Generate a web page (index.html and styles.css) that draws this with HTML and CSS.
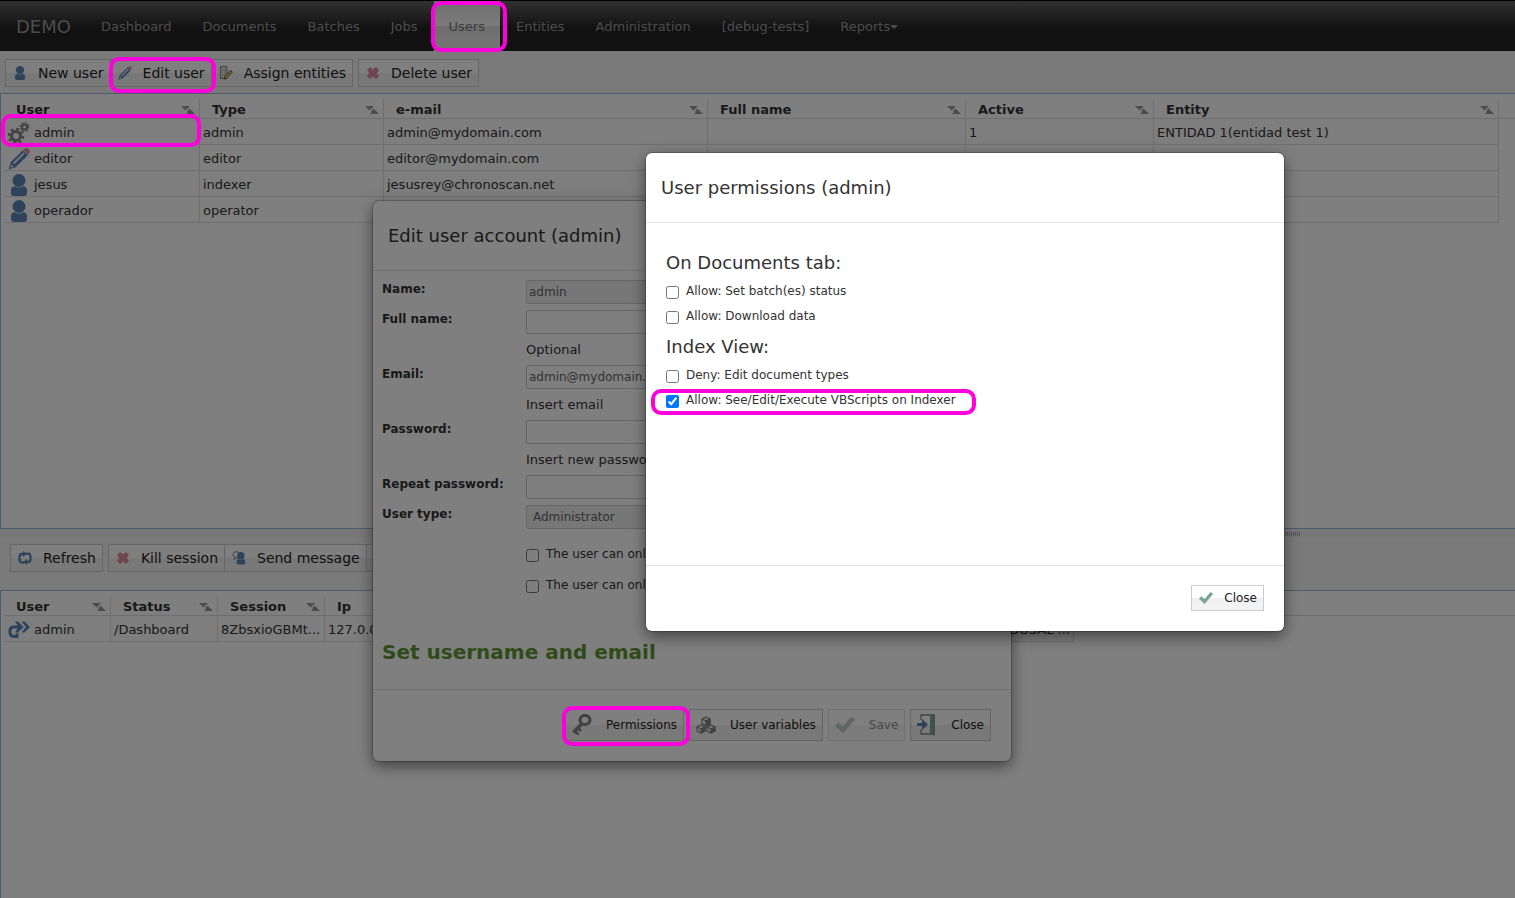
FILE: index.html
```html
<!DOCTYPE html>
<html lang="en">
<head>
<meta charset="utf-8">
<title>Users</title>
<link rel="stylesheet" href="styles.css">
</head>
<body>
<svg class="defs" aria-hidden="true">
  <symbol id="i-user" viewBox="0 0 16 22"><ellipse cx="8" cy="6.500" rx="6.500" ry="6.500"/><path d="M0 19v-3q0-3 3.500-4q4.500 3 9 0q3.500 1 3.500 4v3q0 3-3 3H3q-3 0-3-3z"/></symbol>
  <symbol id="i-pencil" viewBox="0 0 20 20"><path fill="#5b86b8" d="M0.500 19.500l2-6.500L13.500 2l4.500 4.500L7 17.500z"/><path fill="#eef3f9" d="M4.500 13.500L14 4l1.200 1.200L5.700 14.700zM3 15l2 2-2.500 1z"/><path fill="#e08a9c" d="M13.800 1.800Q16.500-.8 18.800 1.200Q21 3.500 18.200 6.200z"/></symbol>
  <symbol id="i-cross" viewBox="0 0 14 14"><path d="M1 4L4 1 7 3.500 10 1 13 4 10.700 7 13 10 10 13 7 10.500 4 13 1 10 3.300 7z"/></symbol>
  <symbol id="i-check" viewBox="0 0 20 17"><path d="M0 9.500L3.500 6 8 10 16.500 0 20 3 8 17z"/></symbol>
  <symbol id="i-sort" viewBox="0 0 14 8"><path d="M0 0h9L4.500 4.500zM5 8h9L9.500 3.500zM6.500 4.500L8.500 2.500 9.500 3.500 6.500 6.500z"/></symbol>
  <symbol id="i-refresh" viewBox="0 0 14 14"><path fill="none" stroke="#5b86b8" stroke-width="2.300" d="M6 11.500H4Q1.500 11.500 1.500 8.500V6Q1.500 3 4 3H7M8 2.700h2q2.500 0 2.500 3V8q0 3-2.500 3H7"/><path d="M5 0l4 3-4 3zM9 8l-4 3 4 3z"/></symbol>
  <symbol id="i-gears" viewBox="0 0 22 22"><g fill="none" stroke="#848484"><circle cx="8" cy="14" r="4.500" stroke-width="3"/><circle cx="8" cy="14" r="7" stroke-width="2.500" stroke-dasharray="2.700 2.800"/><circle cx="16.500" cy="5" r="2.600" stroke-width="2"/><circle cx="16.500" cy="5" r="4.200" stroke-width="1.700" stroke-dasharray="1.600 1.700"/></g></symbol>
  <symbol id="i-login" viewBox="0 0 22 17"><path fill="none" stroke="#5b86b8" stroke-width="3" d="M11 5.500H6Q2 5.500 2 9v2q0 4 5 4h2v-3"/><path d="M7 0h3l5.500 5.500L10 11H7l3.500-5.500zM13.500 0h3L22 5.500 16.500 11h-3L18 5.500z"/></symbol>
  <symbol id="i-entities" viewBox="0 0 14 15"><path fill="#fff" stroke="#777" d="M1 .500h7v13H1z"/><path stroke="#777" stroke-dasharray="1 1" d="M3 2v11M5 2v11M7 2v8" stroke-width="1.300"/><path fill="#e1c14f" stroke="#4d4630" stroke-width=".800" d="M5 14l1-3.500L11.500 5l2 2L8 12.800z"/><path fill="#c45050" d="M11.500 5l1-.800 1.500 1.600-.700 1z"/></symbol>
  <symbol id="i-message" viewBox="0 0 15 15"><circle cx="4.500" cy="4" r="3.300" fill="none" stroke="#999" stroke-width="1.200"/><path fill="#999" d="M2 7v3l3-2z"/><circle cx="9.500" cy="5" r="4"/><path d="M5 13v-2q0-2 2-2.500 2.500 1.500 5 0 2 .500 2 2.500v2q0 1.500-1.500 1.500h-6Q5 14.500 5 13z"/></symbol>
  <symbol id="i-key" viewBox="0 0 20 22"><path fill="none" stroke="#858585" stroke-width="3.500" d="M10 9.500L1.500 18.500"/><path fill="none" stroke="#858585" stroke-width="2.500" d="M3 17l3.500 3.500M6 14l3 3"/><ellipse cx="13" cy="6" rx="5" ry="4.500" fill="none" stroke="#858585" stroke-width="3.200"/></symbol>
  <symbol id="i-cubes" viewBox="0 0 20 18"><g stroke="#858585" stroke-width="1.200"><path fill="#eee" d="M10 1l4 2v5l-4 2-4-2V3zM5 9l4 2v4l-4 2-4-2v-4zM15 9l4 2v4l-4 2-4-2v-4z"/><path fill="#858585" d="M10 5l4-2v5l-4 2zM5 13l4-2v4l-4 2zM15 13l4-2v4l-4 2z"/><path fill="none" d="M6 3l4 2M1 11l4 2M11 11l4 2"/></g></symbol>
  <symbol id="i-door" viewBox="0 0 20 22"><path fill="none" stroke="#888" stroke-width="1.300" d="M4 6V1h13v19H4v-5"/><path fill="#79a594" d="M13 2l5-2v22l-5-2z"/><path fill="#5b86b8" d="M0 9h5V5l6 5.500L5 16v-4H0z"/></symbol>
</svg>

<nav class="navbar">
  <a class="brand" href="#">DEMO</a>
  <a href="#">Dashboard</a>
  <a href="#">Documents</a>
  <a href="#">Batches</a>
  <a href="#">Jobs</a>
  <a class="active" href="#">Users</a>
  <a href="#">Entities</a>
  <a href="#">Administration</a>
  <a href="#">[debug-tests]</a>
  <a href="#">Reports<span class="caret"></span></a>
</nav>

<div class="toolbar">
  <div class="group">
    <button class="btn"><svg class="ic-s blue"><use href="#i-user"/></svg>New user</button>
    <button class="btn"><svg class="ic-s"><use href="#i-pencil"/></svg>Edit user</button>
    <button class="btn"><svg class="ic-s"><use href="#i-entities"/></svg>Assign entities</button>
  </div>
  <button class="btn"><svg class="ic-s red"><use href="#i-cross"/></svg>Delete user</button>
</div>

<section class="panel users">
  <table>
    <colgroup><col class="c-user"><col class="c-type"><col class="c-mail"><col class="c-full"><col class="c-active"><col class="c-entity"><col></colgroup>
    <thead><tr>
      <th>User<svg class="sort"><use href="#i-sort"/></svg></th>
      <th>Type<svg class="sort"><use href="#i-sort"/></svg></th>
      <th>e-mail<svg class="sort"><use href="#i-sort"/></svg></th>
      <th>Full name<svg class="sort"><use href="#i-sort"/></svg></th>
      <th>Active<svg class="sort"><use href="#i-sort"/></svg></th>
      <th>Entity<svg class="sort"><use href="#i-sort"/></svg></th>
      <td class="rest"></td>
    </tr></thead>
    <tbody>
      <tr><td><svg class="ic-r"><use href="#i-gears"/></svg>admin</td><td>admin</td><td>admin@mydomain.com</td><td></td><td>1</td><td>ENTIDAD 1(entidad test 1)</td></tr>
      <tr><td><svg class="ic-r"><use href="#i-pencil"/></svg>editor</td><td>editor</td><td>editor@mydomain.com</td><td></td><td></td><td></td></tr>
      <tr><td><svg class="ic-r blue"><use href="#i-user"/></svg>jesus</td><td>indexer</td><td>jesusrey@chronoscan.net</td><td></td><td></td><td></td></tr>
      <tr><td><svg class="ic-r blue"><use href="#i-user"/></svg>operador</td><td>operator</td><td></td><td></td><td></td><td></td></tr>
    </tbody>
  </table>
</section>

<div class="splitter"><span class="grip"></span></div>

<div class="toolbar lower">
  <button class="btn"><svg class="ic-s blue"><use href="#i-refresh"/></svg>Refresh</button>
  <div class="group">
    <button class="btn"><svg class="ic-s red"><use href="#i-cross"/></svg>Kill session</button>
    <button class="btn"><svg class="ic-s blue"><use href="#i-message"/></svg>Send message</button>
    <button class="btn" aria-label="More"></button>
  </div>
</div>

<section class="panel sessions">
  <table>
    <colgroup><col class="c-ses"><col class="c-s"><col class="c-s"><col class="c-s"><col class="c-s"><col class="c-s"><col class="c-s"><col class="c-s"><col class="c-s"><col class="c-s"><col></colgroup>
    <thead><tr>
      <th>User<svg class="sort"><use href="#i-sort"/></svg></th>
      <th>Status<svg class="sort"><use href="#i-sort"/></svg></th>
      <th>Session<svg class="sort"><use href="#i-sort"/></svg></th>
      <th>Ip</th><th></th><th></th><th></th><th></th><th></th><th></th>
      <td class="rest"></td>
    </tr></thead>
    <tbody>
      <tr><td><svg class="ic-r blue"><use href="#i-login"/></svg>admin</td><td>/Dashboard</td><td>8ZbsxioGBMt...</td><td>127.0.0.1</td><td></td><td></td><td></td><td></td><td></td><td class="end">DUSAL ...</td></tr>
    </tbody>
  </table>
</section>

<form class="dialog edit">
  <h2>Edit user account (admin)</h2>
  <div class="fields">
    <label class="name" for="f-name">Name:</label>
    <div class="value"><input id="f-name" type="text" value="admin" disabled></div>
    <label class="name" for="f-full">Full name:</label>
    <div class="value"><input id="f-full" type="text"><p>Optional</p></div>
    <label class="name" for="f-mail">Email:</label>
    <div class="value"><input id="f-mail" type="text" value="admin@mydomain.com"><p>Insert email</p></div>
    <label class="name" for="f-pass">Password:</label>
    <div class="value"><input id="f-pass" type="password"><p>Insert new password</p></div>
    <label class="name" for="f-rep">Repeat password:</label>
    <div class="value"><input id="f-rep" type="password"></div>
    <label class="name" for="f-kind">User type:</label>
    <div class="value"><select id="f-kind" disabled><option>Administrator</option></select></div>
  </div>
  <div class="limits">
    <label class="tick"><input type="checkbox">The user can only</label>
    <label class="tick"><input type="checkbox">The user can only</label>
  </div>
  <h3>Set username and email</h3>
  <footer>
    <button type="button" class="btn"><svg class="ic-l"><use href="#i-key"/></svg>Permissions</button>
    <button type="button" class="btn"><svg class="ic-l"><use href="#i-cubes"/></svg>User variables</button>
    <button type="button" class="btn" disabled><svg class="ic-l green"><use href="#i-check"/></svg>Save</button>
    <button type="button" class="btn"><svg class="ic-l"><use href="#i-door"/></svg>Close</button>
  </footer>
</form>

<div class="overlay"></div>

<form class="dialog permissions">
  <h2>User permissions (admin)</h2>
  <div class="content">
    <h4>On Documents tab:</h4>
    <label class="tick"><input type="checkbox">Allow: Set batch(es) status</label>
    <label class="tick"><input type="checkbox">Allow: Download data</label>
    <h4>Index View:</h4>
    <label class="tick"><input type="checkbox">Deny: Edit document types</label>
    <label class="tick"><input type="checkbox" checked>Allow: See/Edit/Execute VBScripts on Indexer</label>
  </div>
  <footer>
    <button type="button" class="btn"><svg class="ic-s green"><use href="#i-check"/></svg>Close</button>
  </footer>
</form>

<div class="mark m-users"></div>
<div class="mark m-edit"></div>
<div class="mark m-admin"></div>
<div class="mark m-perm"></div>
<div class="mark m-script"></div>
</body>
</html>
```
FILE: styles.css
```css
* { box-sizing: border-box; }
body {
  margin: 0;
  height: 100vh;
  display: flex;
  flex-direction: column;
  overflow: hidden;
  position: relative;
  background: #f4f4f4;
  color: #333;
  font: 13px/20px Verdana, "DejaVu Sans", sans-serif;
}
.defs { position: absolute; width: 0; height: 0; }
svg { flex: none; }
.blue { fill: #5b86b8; }
.red { fill: #e08a9c; }
.green { fill: #79a594; }

.navbar {
  display: flex;
  flex: none;
  gap: 1px;
  height: 51px;
  padding-left: 1px;
  border-top: 1px solid #000;
  background: linear-gradient(#626262, #222 55%);
}
.navbar a {
  display: flex;
  align-items: center;
  padding: 2px 15px 0;
  color: #999;
  text-decoration: none;
}
.navbar .brand { font-size: 18px; padding-right: 14px; }
.navbar .active { color: #777; background: linear-gradient(#dcdcdc, #f8f8f8 50%, #dcdcdc 50%, #ececec); }
.caret { border: 4px solid transparent; border-top-color: #999; border-bottom: 0; }

.toolbar { display: flex; flex: none; gap: 5px; height: 42px; padding: 8px 5px 6px; }
.toolbar.lower { height: 53px; padding: 7px 10px 18px; }
.group { display: flex; }
.group .btn + .btn { border-left: 0; }
.btn {
  display: flex;
  align-items: center;
  margin: 0;
  padding: 0 6px;
  gap: 10px;
  border: 1px solid #ccc;
  background: linear-gradient(#fff 50%, #f0f0f0 50%, #f4f4f4);
  color: #222;
  font: 14px/20px Verdana, "DejaVu Sans", sans-serif;
  white-space: nowrap;
}
.ic-s { width: 16px; height: 14px; }
.ic-r { width: 22px; height: 22px; }
.ic-l { width: 20px; height: 22px; }

.panel {
  flex: 437 1 0;
  min-height: 0;
  overflow: hidden;
  padding: 5px 0 0 3px;
  border: 1px solid #9fb6d8;
  border-right: 0;
  background: #fff;
}
.sessions { flex-grow: 307; border-bottom: 0; }
table { width: 100%; table-layout: fixed; border-collapse: separate; border-spacing: 0; }
.c-user { width: 196px; }
.c-type { width: 184px; }
.c-mail { width: 324px; }
.c-full { width: 258px; }
.c-active { width: 188px; }
.c-entity { width: 345px; }
.c-ses, .c-s { width: 107px; }
th {
  padding: 2px 12px 0;
  text-align: left;
  font-weight: bold;
  line-height: 17px;
  border-right: 1px solid #ddd;
  border-bottom: 1px solid #ddd;
}
.rest { border: 0; border-bottom: 1px solid #ddd; height: 20px; padding: 0; }
.sort { float: right; width: 14px; height: 8px; margin: 5px -8px 0 0; fill: #999; }
tbody td {
  height: 26px;
  padding: 2px 3px 0;
  border-right: 1px solid #ddd;
  border-bottom: 1px solid #ddd;
  white-space: nowrap;
  overflow: hidden;
  line-height: 18px;
}
tbody td:first-child { padding-left: 4px; }
tbody .ic-r { margin-right: 4px; vertical-align: middle; }
tbody tr:nth-child(odd) td { background: #fcfcfc; }
tbody .end { text-align: right; }

.splitter { flex: none; height: 8px; background: #eee; display: flex; justify-content: flex-end; }
.grip { width: 18px; height: 4px; margin: 3px 214px 0 0; background: repeating-linear-gradient(90deg, #aaa 0 1px, #eee 1px 2px); }

.dialog {
  position: absolute;
  width: 638px;
  border-radius: 6px;
  background: #fff;
  box-shadow: 0 5px 15px rgba(0, 0, 0, .5), 0 0 0 1px rgba(0, 0, 0, .2);
  font-size: 12px;
}
.dialog h2 { margin: 0; padding: 15px; border-bottom: 1px solid #e5e5e5; font-size: 18px; line-height: 39px; font-weight: normal; }
.dialog footer { display: flex; justify-content: flex-end; gap: 5px; padding: 19px 20px 20px; border-top: 1px solid #e5e5e5; }
.dialog .btn { height: 32px; font-size: 12px; }
.edit .btn { gap: 14px; }
.btn:disabled { opacity: .5; }
.edit { left: 373px; top: 201px; }
.fields { display: grid; grid-template-columns: 144px 1fr; row-gap: 6px; padding: 9px; }
.name { font-size: 12px; font-weight: bold; line-height: 18px; }
.value { min-width: 0; }
.value input, .value select {
  display: block;
  width: 300px;
  height: 24px;
  padding: 0 2px;
  border: 1px solid #ccc;
  border-radius: 2px;
  background: #fff;
  color: #666;
  font: 12px/18px Verdana, "DejaVu Sans", sans-serif;
}
.value :disabled { background: #eee; opacity: 1; }
.value p { margin: 6px 0 0; font-size: 13px; line-height: 19px; }
.limits { display: grid; gap: 11px; padding: 6px 9px 0 153px; }
.tick { display: flex; align-items: flex-start; gap: 7px; line-height: 20px; white-space: nowrap; }
.tick input { width: 13px; height: 13px; margin: 5px 0 0; }
.edit h3 { margin: 44px 0 24px 9px; color: #5e9732; font-size: 20px; line-height: 26px; }

.overlay { position: absolute; inset: 0; background: rgba(0, 0, 0, .5); }

.permissions { left: 646px; top: 153px; }
.content { height: 342px; padding: 24px 20px; }
.content h4 { margin: 1px 0 3px; font-size: 18px; line-height: 30px; font-weight: normal; }
.content .tick { margin-bottom: 5px; }
.content .tick + h4 { margin-top: 6px; }
.permissions .btn { height: 26px; }
.permissions .ic-s { height: 12px; }

.mark { position: absolute; border: 4px solid #ff00dc; border-radius: 10px; pointer-events: none; }
.m-users { left: 431px; top: 1px; width: 76px; height: 51px; }
.m-edit { left: 109px; top: 57px; width: 107px; height: 36px; }
.m-admin { left: 1px; top: 114px; width: 200px; height: 33px; }
.m-perm { left: 562px; top: 706px; width: 128px; height: 40px; }
.m-script { left: 651px; top: 389px; width: 325px; height: 26px; }
```
